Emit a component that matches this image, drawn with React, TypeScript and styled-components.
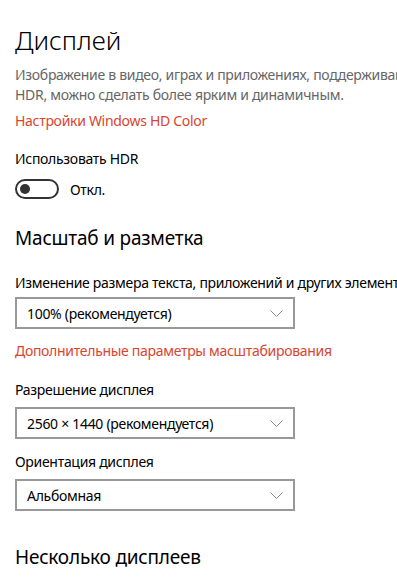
import React from "react";
import styled, { createGlobalStyle } from "styled-components";

const GlobalStyle = createGlobalStyle`
  html, body {
    margin: 0;
    padding: 0;
    background: #ffffff;
  }
  body {
    font-family: "Segoe UI", "Noto Sans", "Open Sans", sans-serif;
    color: #000;
    overflow: hidden;
  }
`;

const Page = styled.div`
  width: 397px;
  height: 588px;
  overflow: hidden;
  padding: 22px 0 0 15px;
  box-sizing: border-box;
  display: flex;
  flex-direction: column;
  align-items: flex-start;
  white-space: nowrap;
  letter-spacing: -0.3px;
`;

const PageTitle = styled.h1`
  margin: 0;
  font-size: 26px;
  line-height: 36px;
  font-weight: 300;
  letter-spacing: 0;
`;

const SectionTitle = styled.h2<{ $top: number }>`
  margin: ${(p) => p.$top}px 0 0;
  font-size: 19px;
  line-height: 28px;
  font-weight: 400;
  letter-spacing: -0.2px;
`;

const Description = styled.p`
  margin: 7px 0 0;
  font-size: 14px;
  line-height: 20px;
  color: #666;
`;

const RedLink = styled.a<{ $top: number }>`
  margin-top: ${(p) => p.$top}px;
  font-size: 14px;
  line-height: 20px;
  color: #d9452f;
  text-decoration: none;
  cursor: pointer;
`;

const Label = styled.div<{ $top: number }>`
  margin-top: ${(p) => p.$top}px;
  font-size: 14px;
  line-height: 20px;
`;

const ToggleRow = styled.div`
  margin-top: 10px;
  display: flex;
  align-items: center;
  gap: 11px;
  height: 20px;
  font-size: 14px;
`;

const Toggle = styled.div`
  width: 44px;
  height: 20px;
  box-sizing: border-box;
  border: 2px solid #333;
  border-radius: 10px;
  display: flex;
  align-items: center;
  padding-left: 3px;
`;

const Knob = styled.div`
  width: 10px;
  height: 10px;
  border-radius: 50%;
  background: #333;
`;

const Select = styled.div<{ $top: number }>`
  margin-top: ${(p) => p.$top}px;
  width: 280px;
  height: 32px;
  box-sizing: border-box;
  border: 2px solid #999;
  display: flex;
  align-items: center;
  justify-content: space-between;
  padding: 0 10px 0 10px;
  font-size: 14px;
`;

const Chevron = () => (
  <svg width="13" height="7" viewBox="0 0 13 7">
    <polyline points="0.5,0.5 6.5,6.5 12.5,0.5" fill="none" stroke="#888" strokeWidth="1" />
  </svg>
);

export default function App() {
  return (
    <>
      <GlobalStyle />
      <Page>
        <PageTitle>Дисплей</PageTitle>
        <Description>
          Изображение в видео, играх и приложениях, поддерживающих
          <br />
          HDR, можно сделать более ярким и динамичным.
        </Description>
        <RedLink $top={6}>Настройки Windows HD Color</RedLink>
        <Label $top={18}>Использовать HDR</Label>
        <ToggleRow>
          <Toggle>
            <Knob />
          </Toggle>
          <span>Откл.</span>
        </ToggleRow>

        <SectionTitle $top={25}>Масштаб и разметка</SectionTitle>
        <Label $top={21}>Изменение размера текста, приложений и других элементов</Label>
        <Select $top={4}>
          <span>100% (рекомендуется)</span>
          <Chevron />
        </Select>
        <RedLink $top={12}>Дополнительные параметры масштабирования</RedLink>
        <Label $top={19}>Разрешение дисплея</Label>
        <Select $top={7}>
          <span>2560 × 1440 (рекомендуется)</span>
          <Chevron />
        </Select>
        <Label $top={13}>Ориентация дисплея</Label>
        <Select $top={7}>
          <span>Альбомная</span>
          <Chevron />
        </Select>

        <SectionTitle $top={32}>Несколько дисплеев</SectionTitle>
      </Page>
    </>
  );
}
